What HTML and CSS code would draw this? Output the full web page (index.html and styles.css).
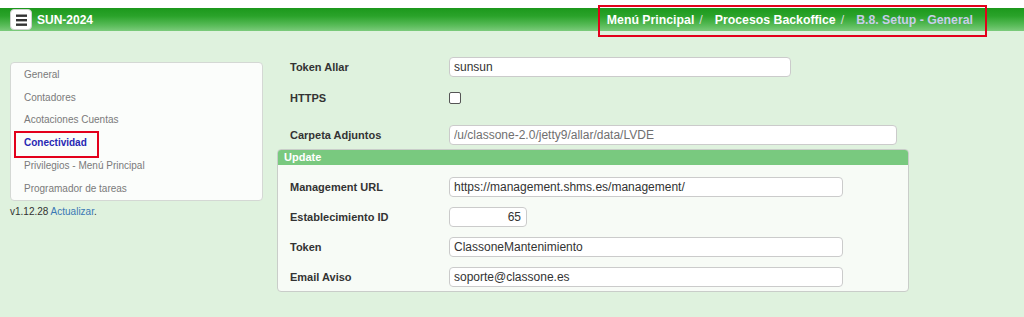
FILE: index.html
```html
<!DOCTYPE html>
<html lang="es">
<head>
<meta charset="utf-8">
<title>SUN-2024 - B.8. Setup - General</title>
<link rel="stylesheet" href="styles.css">
</head>
<body>
<header class="topbar">
  <button class="menu-btn" type="button" aria-label="Menú">
    <svg width="11" height="12" viewBox="0 0 11 12" aria-hidden="true">
      <rect x="0" y="0.5" width="11" height="2.4" fill="#333"/>
      <rect x="0" y="5" width="11" height="2.4" fill="#333"/>
      <rect x="0" y="9.5" width="11" height="2.4" fill="#333"/>
    </svg>
  </button>
  <span class="brand">SUN-2024</span>
  <nav class="breadcrumb">
    <span class="crumb">Menú Principal</span><span class="sep">/</span><span class="crumb">Procesos Backoffice</span><span class="sep">/</span><span class="crumb crumb-current">B.8. Setup - General</span>
  </nav>
</header>
<main class="layout">
  <aside class="sidebar">
    <ul class="side-menu">
      <li class="side-item">General</li>
      <li class="side-item">Contadores</li>
      <li class="side-item">Acotaciones Cuentas</li>
      <li class="side-item side-item-active">Conectividad</li>
      <li class="side-item">Privilegios - Menú Principal</li>
      <li class="side-item">Programador de tareas</li>
    </ul>
    <p class="version">v1.12.28 <a class="version-link" href="#">Actualizar</a>.</p>
  </aside>
  <section class="content">
    <div class="form-row">
      <label class="form-label">Token Allar</label>
      <input class="field field-md" type="text" value="sunsun">
    </div>
    <div class="form-row form-row-check">
      <label class="form-label">HTTPS</label>
      <input class="check" type="checkbox">
    </div>
    <div class="form-row form-row-path">
      <label class="form-label">Carpeta Adjuntos</label>
      <input class="field field-lg field-muted" type="text" value="/u/classone-2.0/jetty9/allar/data/LVDE" readonly>
    </div>
    <div class="panel">
      <div class="panel-head">Update</div>
      <div class="panel-body">
        <div class="form-row">
          <label class="form-label">Management URL</label>
          <input class="field field-url" type="text" value="https://management.shms.es/management/">
        </div>
        <div class="form-row">
          <label class="form-label">Establecimiento ID</label>
          <input class="field field-num" type="text" value="65">
        </div>
        <div class="form-row">
          <label class="form-label">Token</label>
          <input class="field field-url" type="text" value="ClassoneMantenimiento">
        </div>
        <div class="form-row">
          <label class="form-label">Email Aviso</label>
          <input class="field field-url" type="text" value="soporte@classone.es">
        </div>
      </div>
    </div>
  </section>
</main>
</body>
</html>
```

FILE: styles.css
```css
* {
  box-sizing: border-box;
}

html, body {
  margin: 0;
  padding: 0;
  background: #ffffff;
  font-family: "Liberation Sans", Arial, Helvetica, sans-serif;
  color: #333;
}

.topbar {
  margin-top: 8px;
  height: 23px;
  display: flex;
  align-items: center;
  padding-left: 10px;
  background: linear-gradient(#1c981c 0%, #2aa32a 35%, #58bb58 75%, #7ccb7c 100%);
}

.menu-btn {
  width: 22px;
  height: 21px;
  margin: 0;
  padding: 0;
  border: 1px solid #d0d0d0;
  border-radius: 4px;
  background: #ffffff;
  display: flex;
  align-items: center;
  justify-content: center;
}

.menu-btn svg {
  display: block;
}

.brand {
  margin-left: 5px;
  font-size: 12px;
  font-weight: bold;
  color: #ffffff;
}

.breadcrumb {
  position: relative;
  margin-left: auto;
  margin-right: 51px;
  align-self: stretch;
  display: flex;
  align-items: center;
  font-size: 12.3px;
  font-weight: bold;
  color: #ffffff;
  white-space: nowrap;
}

.breadcrumb::after {
  content: "";
  position: absolute;
  left: -9px;
  right: -14px;
  top: -3px;
  bottom: -6px;
  border: 2px solid #e3001b;
}

.sep {
  margin: 0 12px 0 5px;
  font-weight: normal;
  color: #d6dcd6;
}

.crumb-current {
  color: #c8cdea;
}

.layout {
  display: flex;
  align-items: flex-start;
  min-height: calc(100vh - 31px);
  padding-left: 10px;
  background: #dff2de;
}

.sidebar {
  width: 253px;
  margin-top: 31px;
}

.side-menu {
  list-style: none;
  margin: 0;
  padding: 0;
  background: #fbfdfb;
  border: 1px solid #d4d8d4;
  border-radius: 4px;
}

.side-item {
  position: relative;
  padding-left: 13px;
  line-height: 22.7px;
  font-size: 10px;
  color: #7a7a7a;
}

.side-item:first-child {
  padding-top: 1px;
}

.side-item-active {
  font-weight: bold;
  color: #2727b3;
}

.side-item-active::after {
  content: "";
  position: absolute;
  left: 3px;
  top: -1px;
  width: 81px;
  height: 23px;
  border: 2px solid #e3001b;
}

.version {
  margin: 5px 0 0;
  font-size: 10px;
  line-height: 12px;
  color: #333;
}

.version-link {
  color: #3a78b5;
  text-decoration: none;
}

.content {
  width: 632px;
  margin-left: 14px;
  padding-top: 26px;
}

.form-row {
  display: flex;
  align-items: center;
  height: 20px;
  padding-left: 13px;
}

.form-row-check {
  margin-top: 11px;
}

.form-row-path {
  margin-top: 17px;
}

.form-label {
  width: 159px;
  flex: none;
  font-size: 11px;
  font-weight: bold;
  color: #333;
  margin-top: -1px;
}

.field {
  height: 20px;
  margin: 0;
  padding: 0 4px;
  border: 1px solid #cbcbcb;
  border-radius: 4px;
  background: #ffffff;
  font-family: "Liberation Sans", Arial, Helvetica, sans-serif;
  font-size: 12px;
  color: #333;
  outline: none;
}

.field-md {
  width: 342px;
}

.field-lg {
  width: 448px;
}

.field-url {
  width: 394px;
}

.field-num {
  width: 78px;
  text-align: right;
  padding-right: 5px;
}

.field-muted {
  color: #707070;
}

.check {
  appearance: none;
  -webkit-appearance: none;
  width: 12px;
  height: 12px;
  margin: 0;
  border: 1px solid #555;
  border-radius: 2px;
  background: #ffffff;
}

.panel {
  margin-top: 4px;
  border: 1px solid #c9cdc9;
  border-radius: 4px;
  background: #f7fbf6;
  overflow: hidden;
}

.panel-head {
  height: 15px;
  padding-left: 6px;
  background: #79c97f;
  font-size: 11px;
  font-weight: bold;
  line-height: 15px;
  color: #ffffff;
}

.panel-body {
  display: flex;
  flex-direction: column;
  gap: 10px;
  padding: 12px 0 4px 12px;
}

.panel-body .form-row {
  padding-left: 0;
}
```
